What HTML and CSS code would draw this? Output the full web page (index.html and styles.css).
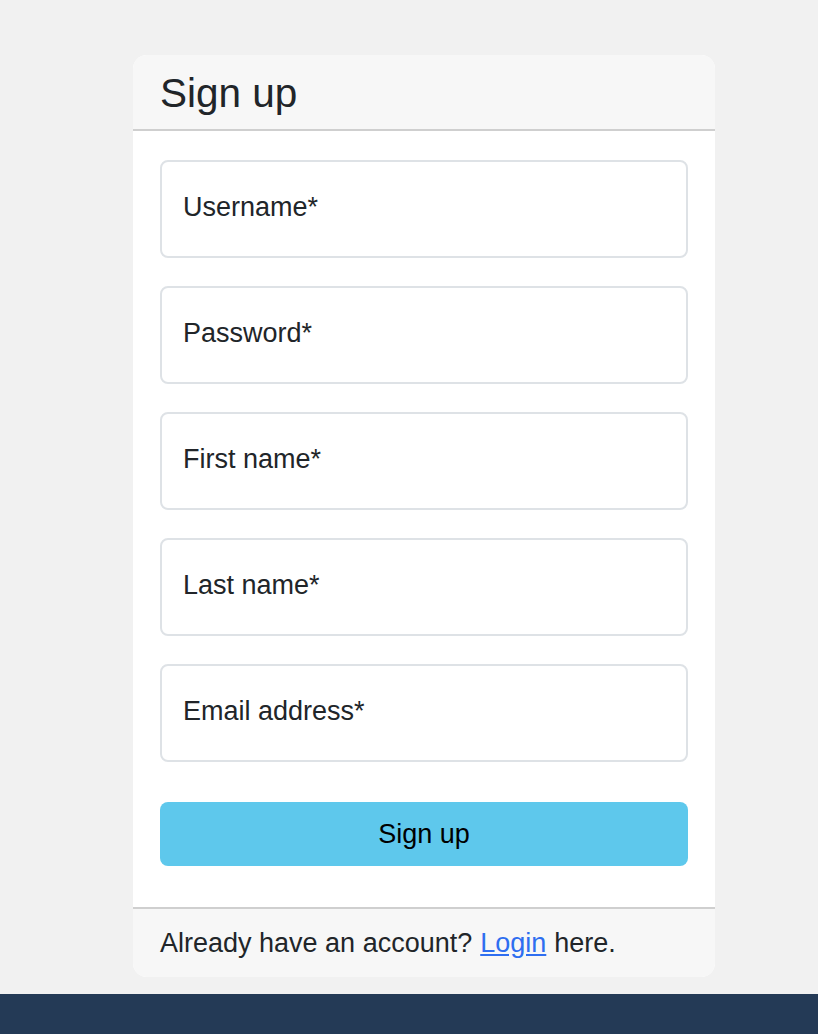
FILE: index.html
```html
<!DOCTYPE html>
<html>
<head>
<meta charset="utf-8">
<link rel="stylesheet" href="styles.css">
</head>
<body>
<main class="page">
  <section class="card">
    <header class="card-header">
      <h1 class="title">Sign up</h1>
    </header>
    <form class="card-body">
      <div class="field"><span class="field-label">Username*</span></div>
      <div class="field"><span class="field-label">Password*</span></div>
      <div class="field"><span class="field-label">First name*</span></div>
      <div class="field"><span class="field-label">Last name*</span></div>
      <div class="field"><span class="field-label">Email address*</span></div>
      <button type="button" class="btn">Sign up</button>
    </form>
    <footer class="card-footer">
      Already have an account? <a href="#" class="link">Login</a> here.
    </footer>
  </section>
</main>
<div class="bottom-bar"></div>
</body>
</html>
```
FILE: styles.css
```css
html, body {
  margin: 0;
  padding: 0;
}
body {
  background: #f1f1f1;
  font-family: "Liberation Sans", Arial, sans-serif;
  color: #212529;
  min-height: 1034px;
  display: flex;
  flex-direction: column;
}
.page {
  flex: 1;
  display: flex;
  justify-content: center;
  padding-top: 55px;
  padding-bottom: 17px;
  padding-left: 30px;
}
.card {
  width: 582px;
  background: #fff;
  border-radius: 14px;
  overflow: hidden;
  display: flex;
  flex-direction: column;
}
.card-header {
  background: #f7f7f7;
  border-bottom: 2px solid #cfcfcf;
  height: 74px;
  padding: 0 27px;
  display: flex;
  align-items: center;
}
.title {
  margin: 0;
  font-weight: 400;
  font-size: 40.5px;
  line-height: 1;
  padding-top: 2px;
}
.card-body {
  padding: 29px 27px 41px;
  display: flex;
  flex-direction: column;
  gap: 28px;
  border-bottom: 2px solid #cfcfcf;
}
.field {
  height: 94px;
  border: 2px solid #dee2e6;
  border-radius: 8px;
  display: flex;
  align-items: center;
  padding: 0 21px;
}
.field-label {
  font-size: 27px;
  line-height: 1;
  margin-top: -3px;
}
.btn {
  margin-top: 12px;
  height: 64px;
  border: none;
  border-radius: 8px;
  background: #5ec8ec;
  color: #000;
  font-family: "Liberation Sans", Arial, sans-serif;
  font-size: 27px;
  padding: 0;
}
.card-footer {
  background: #f7f7f7;
  height: 68px;
  display: flex;
  align-items: center;
  padding: 0 27px;
  font-size: 27px;
}
.link {
  color: #2e6ef0;
  text-decoration: underline;
  margin: 0 8px;
}
.bottom-bar {
  height: 40px;
  background: #243a56;
}
```
